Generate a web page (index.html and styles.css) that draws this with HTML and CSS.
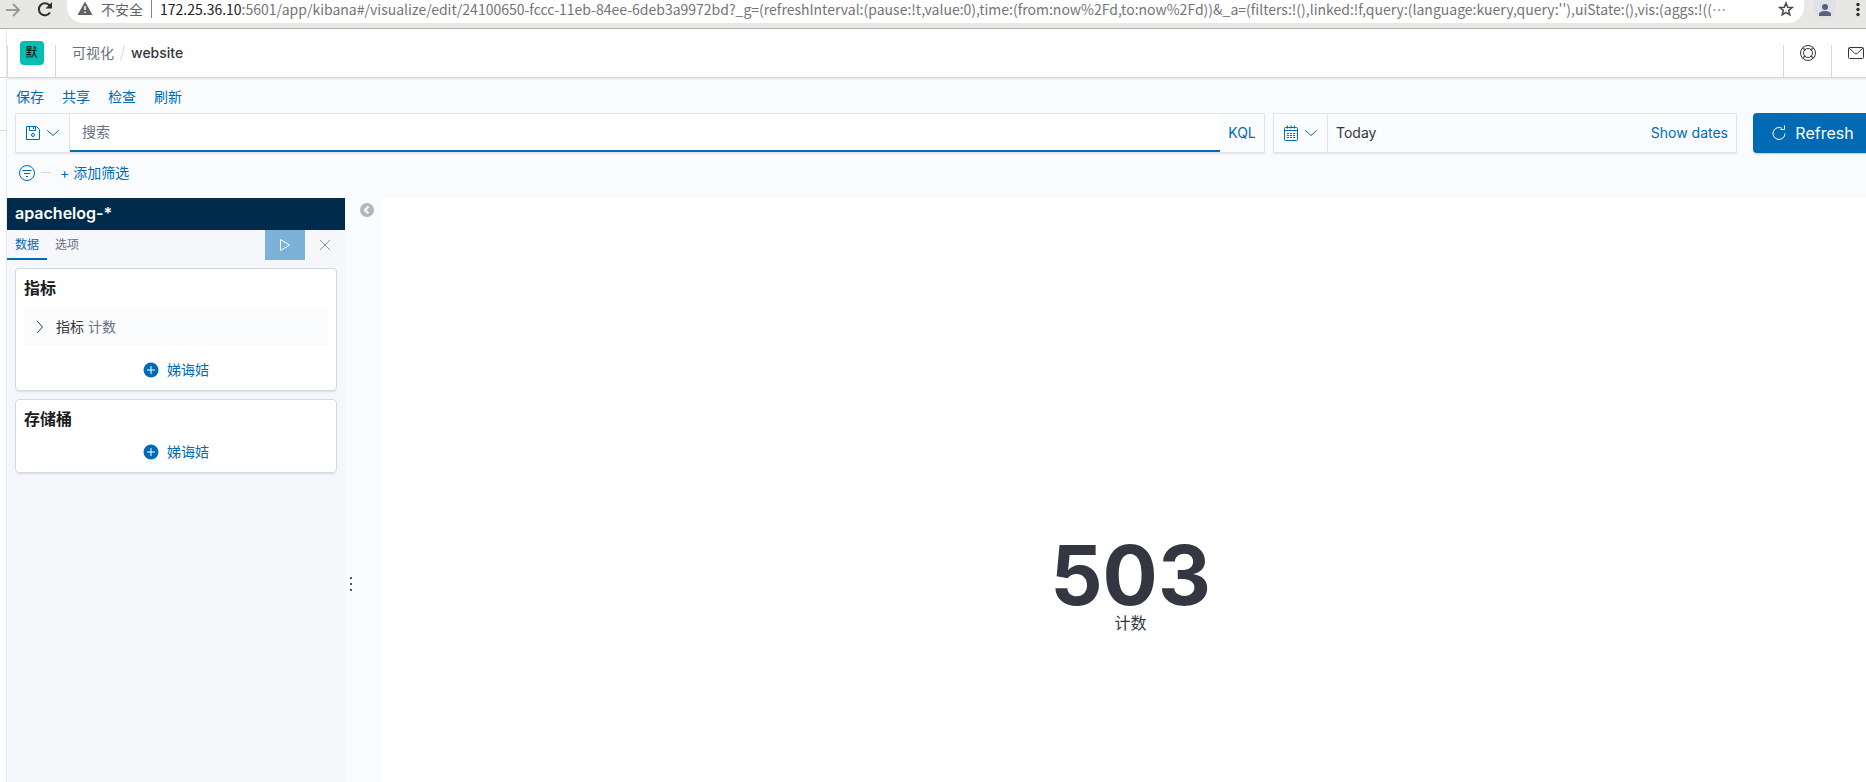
FILE: index.html
```html
<!DOCTYPE html>
<html lang="zh-CN">

<head>
  <meta charset="UTF-8">
  <meta name="viewport" content="width=device-width, initial-scale=1.0">
  <title>website - Kibana</title>
  <link rel="stylesheet" href="styles.css">
</head>

<body>
  <div class="browser-bar">
    <button class="browser-btn" type="button" aria-label="Forward">
      <svg width="16" height="16" viewBox="0 0 16 16" fill="none" stroke="#9a9a98" stroke-width="2"><path d="M1 9h13M8 3l6 6-6 6"/></svg>
    </button>
    <button class="browser-btn" type="button" aria-label="Reload">
      <svg width="16" height="16" viewBox="0 0 16 16"><path d="M13 11.5A6 6 0 1 1 12.600 4.500" fill="none" stroke="#2d3033" stroke-width="2"/><path d="M15 1v6.500H8.500z" fill="#2d3033"/></svg>
    </button>
    <div class="url-box">
      <svg width="16" height="16" viewBox="0 0 16 16"><path d="M8 1.500L15.500 15H.5z" fill="#5f6368"/><path d="M7.250 6h1.500v4h-1.500zM7.250 11.500h1.500V13h-1.500z" fill="#fff"/></svg>
      <span class="insecure">不安全</span>
      <span class="url"><b>172.25.36.10</b>:5601/app/kibana#/visualize/edit/24100650-fccc-11eb-84ee-6deb3a9972bd?_g=(refreshInterval:(pause:!t,value:0),time:(from:now%2Fd,to:now%2Fd))&amp;_a=(filters:!(),linked:!f,query:(language:kuery,query:''),uiState:(),vis:(aggs:!((…</span>
      <button class="browser-btn" type="button" aria-label="Bookmark">
        <svg width="16" height="16" viewBox="0 0 16 16" fill="none" stroke="#45484c" stroke-width="1.500"><path d="M8 2l1.700 4.200 4.500.3-3.500 2.900 1.100 4.400L8 11.400l-3.800 2.400 1.100-4.400-3.500-2.900 4.500-.3z"/></svg>
      </button>
    </div>
    <button class="avatar" type="button" aria-label="Profile">
      <svg width="14" height="14" viewBox="0 0 14 14" fill="#56617a"><circle cx="7" cy="4" r="3"/><path d="M1 13v-2c0-2 3-3 6-3s6 1 6 3v2z"/></svg>
    </button>
    <button class="browser-btn" type="button" aria-label="Menu">
      <svg width="4" height="16" viewBox="0 0 4 16" fill="#2d3033"><circle cx="2" cy="3.500" r="1.700"/><circle cx="2" cy="8.500" r="1.700"/><circle cx="2" cy="13.500" r="1.700"/></svg>
    </button>
  </div>

  <div class="page">
    <div class="rail">
      <div class="rail-top"></div>
      <div class="rail-group"></div>
    </div>

    <div class="app">
      <header class="header">
        <div class="header-cell space"><button class="space-badge" type="button">默</button></div>
        <nav class="breadcrumbs">
          <a href="#">可视化</a>
          <span class="slash"></span>
          <strong>website</strong>
        </nav>
        <div class="header-cell">
          <button class="icon-btn" type="button" aria-label="Help">
            <svg width="16" height="16" viewBox="0 0 16 16" fill="none" stroke="#343741"><circle cx="8" cy="8" r="7.500"/><circle cx="8" cy="8" r="4.500"/><path d="M3 2.500l2.500 2.500M2.500 3l2.500 2.500M13 2.500l-2.500 2.500M13.500 3l-2.500 2.500M3 13.500l2.500-2.500M2.500 13l2.500-2.500M13 13.500l-2.500-2.500M13.500 13l-2.500-2.500"/></svg>
          </button>
        </div>
        <div class="header-cell">
          <button class="icon-btn" type="button" aria-label="News">
            <svg width="16" height="16" viewBox="0 0 16 16" fill="none" stroke="#343741"><rect x=".5" y="2.500" width="15" height="11" rx="1"/><path d="M1 3l5.800 5.400a1.700 1.700 0 0 0 2.400 0L15 3"/></svg>
          </button>
        </div>
      </header>

      <nav class="menu">
        <a href="#">保存</a>
        <a href="#">共享</a>
        <a href="#">检查</a>
        <a href="#">刷新</a>
      </nav>

      <form class="query-row">
        <div class="query-bar">
          <button class="prepend" type="button" aria-label="Saved queries">
            <svg width="16" height="16" viewBox="0 0 16 16" fill="none" stroke="#006bb4"><path d="M1.500 1.500h10l3 3v10h-13zM4.500 1.500v4h6v-4M8.500 2v2"/><circle cx="8" cy="10" r="1.500"/></svg>
            <svg width="16" height="16" viewBox="0 0 16 16" fill="none" stroke="#006bb4" stroke-linecap="round"><path d="M2.500 5.500l5.500 5 5.500-5"/></svg>
          </button>
          <input class="query-input" type="text" placeholder="搜索" aria-label="搜索">
          <button class="kql" type="button">KQL</button>
        </div>
        <div class="date-picker">
          <button class="prepend" type="button" aria-label="Date quick select">
            <svg width="16" height="16" viewBox="0 0 16 16" fill="none" stroke="#006bb4"><rect x="1.500" y="2.500" width="13" height="13" rx="1"/><path d="M1 5.500h14M4.500.5v3M8 .5v3M11.500.5v3"/><path d="M4 8.500h8M4 10.500h8M4 12.500h8" stroke-dasharray="2 1"/></svg>
            <svg width="16" height="16" viewBox="0 0 16 16" fill="none" stroke="#006bb4" stroke-linecap="round"><path d="M2.500 5.500l5.500 5 5.500-5"/></svg>
          </button>
          <button class="date-range" type="button"><span>Today</span><span class="show-dates">Show dates</span></button>
        </div>
        <button class="refresh" type="button">
          <svg width="16" height="16" viewBox="0 0 16 16" fill="none" stroke="#fff"><path d="M11 3.300A6 6 0 1 0 14 8.500M9.500 4.500h4v-4"/></svg>
          Refresh
        </button>
      </form>

      <div class="filters">
        <button class="icon-btn" type="button" aria-label="Filter options">
          <svg width="16" height="16" viewBox="0 0 16 16" fill="none" stroke="#006bb4"><circle cx="8" cy="8" r="7.500"/><path d="M3.500 5.500h9M5 8.500h6M7 11.500h2"/></svg>
        </button>
        <span class="dash"></span>
        <a href="#">+ 添加筛选</a>
      </div>

      <main class="editor">
        <aside class="sidebar">
          <h2 class="index-title">apachelog-*</h2>
          <div class="tabs">
            <button class="tab active" type="button">数据</button>
            <button class="tab" type="button">选项</button>
            <button class="apply" type="button" aria-label="Apply changes">
              <svg width="16" height="16" viewBox="0 0 16 16" fill="none" stroke="#fff"><path d="M3.500 2.500v11l9-5.500z" stroke-linejoin="round"/></svg>
            </button>
            <button class="discard" type="button" aria-label="Discard changes">
              <svg width="12" height="12" viewBox="0 0 12 12" fill="none" stroke="#8e9299"><path d="M1 1l10 10M11 1L1 11"/></svg>
            </button>
          </div>

          <section class="card">
            <h3>指标</h3>
            <button class="agg" type="button">
              <svg width="16" height="16" viewBox="0 0 16 16" fill="none" stroke="#343741" stroke-linecap="round"><path d="M5.500 2.500l5 5.500-5 5.500"/></svg>
              <span>指标 <em>计数</em></span>
            </button>
            <button class="add" type="button">
              <svg width="16" height="16" viewBox="0 0 16 16"><circle cx="8" cy="8" r="7.500" fill="#006bb4"/><path d="M8 4v8M4 8h8" stroke="#fff"/></svg>
              娣诲姞
            </button>
          </section>

          <section class="card">
            <h3>存储桶</h3>
            <button class="add" type="button">
              <svg width="16" height="16" viewBox="0 0 16 16"><circle cx="8" cy="8" r="7.500" fill="#006bb4"/><path d="M8 4v8M4 8h8" stroke="#fff"/></svg>
              娣诲姞
            </button>
          </section>
        </aside>

        <div class="resizer">
          <button class="collapse" type="button" aria-label="Toggle sidebar">
            <svg width="14" height="14" viewBox="0 0 14 14"><circle cx="7" cy="7" r="7" fill="#b4b6ba"/><path d="M8.500 3.500L5 7l3.500 3.500" fill="none" stroke="#fff" stroke-width="2"/></svg>
          </button>
          <div class="grip"><i></i><i></i><i></i></div>
        </div>

        <div class="visualization">
          <div class="metric-value">503</div>
          <div class="metric-label">计数</div>
        </div>
      </main>
    </div>
  </div>
</body>

</html>
```
FILE: styles.css
```css
* {
  box-sizing: border-box;
}

body {
  margin: 0;
  height: 100vh;
  overflow: hidden;
  background-color: #fff;
  color: #343741;
  font-family: Inter, "Noto Sans CJK SC", sans-serif;
  font-size: 14px;
  line-height: 20px;
}

button {
  display: flex;
  align-items: center;
  justify-content: center;
  margin: 0;
  padding: 0;
  border: none;
  background: none;
  color: inherit;
  font: inherit;
  cursor: pointer;
}

svg {
  display: block;
  flex: none;
}

a {
  color: #006bb4;
  text-decoration: none;
}

/* browser toolbar */
.browser-bar {
  display: flex;
  align-items: flex-start;
  height: 29px;
  padding: 0 6px 0 5px;
  background-color: #e7e7e4;
  border-bottom: 1px solid #a9a9a5;
  font-family: "Noto Sans CJK SC", sans-serif;
}

.browser-btn {
  height: 18px;
  margin-right: 16px;
}

.browser-bar > .browser-btn:last-child {
  margin: 0;
}

.url-box {
  display: flex;
  flex: 1;
  align-items: flex-start;
  min-width: 0;
  height: 23px;
  padding: 0 4px 0 10px;
  margin-right: 10px;
  margin-left: -2px;
  background-color: #fff;
  border-radius: 0 0 16px 16px;
}

.insecure {
  margin: 0 8px;
  padding-right: 8px;
  border-right: 1px solid #80868b;
  color: #5f6368;
  line-height: 18px;
}

.url {
  flex: 1;
  color: #757575;
  line-height: 18px;
  white-space: nowrap;
}

.url b {
  color: #202124;
  font-weight: normal;
}

.url-box .browser-btn {
  margin: 0 6px;
}

.avatar {
  width: 22px;
  height: 20px;
  margin-right: 20px;
  background-color: #dfe1e8;
  border-radius: 0 0 11px 11px;
}

/* page frame */
.page {
  display: flex;
}

.rail {
  flex: none;
  width: 7px;
}

.rail-top {
  height: 49px;
  border-bottom: 1px solid #d3dae6;
}

.rail-group {
  height: 53px;
  border-bottom: 1px solid #d3dae6;
}

.app {
  flex: none;
  width: calc(100% + 7px);
  background-color: #fafbfd;
  box-shadow: -1px 0 1px #e6eaf1;
}

.header {
  display: flex;
  align-items: flex-end;
  height: 49px;
  padding-right: 1px;
  background-color: #fff;
  border-bottom: 1px solid #d3dae6;
  box-shadow: 0 2px 2px -1px rgba(152, 162, 179, 0.3);
}

.header-cell {
  display: flex;
  align-items: flex-start;
  justify-content: center;
  width: 48px;
  height: 32px;
  border-left: 1px solid #d3dae6;
}

.header-cell.space {
  width: 49px;
  border-right: 1px solid #d3dae6;
}

.space-badge {
  width: 24px;
  height: 24px;
  margin-top: -4px;
  background-color: #00bfb3;
  border-radius: 4px;
  color: #000;
  font-size: 12px;
}

.breadcrumbs {
  display: flex;
  flex: 1;
  align-items: center;
  height: 32px;
  padding: 0 16px 16px;
}

.breadcrumbs a {
  color: #69707d;
}

.breadcrumbs strong {
  font-weight: 500;
}

.slash {
  width: 1px;
  height: 16px;
  margin: 0 8px;
  background-color: #d3dae6;
  transform: rotate(15deg);
}

/* query area */
.menu {
  display: flex;
  gap: 18px;
  padding: 9px 9px 6px;
}

.query-row {
  display: flex;
  gap: 8px;
  padding: 0 8px;
}

.query-bar,
.date-picker {
  display: flex;
  height: 40px;
  border: 1px solid #e0e4ec;
  background-color: #fbfcfd;
  box-shadow: 0 2px 2px -1px rgba(152, 162, 179, 0.3);
}

.query-bar {
  flex: 1;
}

.date-picker {
  width: 464px;
}

.prepend {
  gap: 4px;
  width: 54px;
  border-right: 1px solid #e0e4ec;
}

.query-input {
  flex: 1;
  padding: 0 12px;
  border: none;
  border-bottom: 2px solid #006bb4;
  background-color: #fff;
  outline: none;
  color: #343741;
  font: inherit;
}

.query-input::placeholder {
  color: #69707d;
}

.kql {
  width: 44px;
  color: #006bb4;
}

.date-range {
  flex: 1;
  justify-content: space-between;
  padding: 0 8px;
}

.show-dates {
  color: #006bb4;
}

.refresh {
  gap: 8px;
  width: 119px;
  height: 40px;
  margin-left: 8px;
  background-color: #006bb4;
  border-radius: 4px;
  box-shadow: 0 2px 2px -1px rgba(54, 97, 126, 0.3);
  color: #fff;
  font-size: 16px;
}

.filters {
  display: flex;
  align-items: center;
  height: 45px;
  padding: 0 12px 6px;
}

.dash {
  width: 10px;
  height: 1px;
  margin: 0 9px 0 6px;
  background-color: #d3dae6;
}

/* editor */
.editor {
  display: flex;
  height: calc(100vh - 10px);
}

.sidebar {
  width: 338px;
  background-color: #f5f7fa;
}

.index-title {
  margin: 0;
  padding: 3px 8px 5px;
  background-color: #002b4a;
  color: #fff;
  font-size: 16px;
  font-weight: 600;
  line-height: 24px;
}

.tabs {
  display: flex;
  height: 30px;
  margin-bottom: 8px;
}

.tab {
  width: 40px;
  padding-top: 2px;
  border-bottom: 2px solid transparent;
  color: #69707d;
  font-size: 12px;
}

.tab.active {
  border-color: #006bb4;
  color: #006bb4;
}

.apply {
  width: 40px;
  margin-left: auto;
  background-color: #7cb1d8;
}

.discard {
  width: 40px;
}

.card {
  margin: 0 8px 8px;
  padding: 8px;
  background-color: #fff;
  border: 1px solid #d3dae6;
  border-radius: 4px;
  box-shadow: 0 2px 2px -1px rgba(152, 162, 179, 0.3);
}

.card h3 {
  margin: 0 0 10px;
  color: #1a1c21;
  font-size: 16px;
  font-weight: 600;
  line-height: 22px;
}

.agg {
  gap: 8px;
  justify-content: flex-start;
  width: 100%;
  height: 37px;
  margin-bottom: 12px;
  padding: 0 8px 2px;
  background-color: #fafbfd;
  border-radius: 4px;
}

.agg em {
  color: #69707d;
  font-style: normal;
}

.add {
  gap: 8px;
  width: 100%;
  height: 24px;
  color: #006bb4;
}

.resizer {
  display: flex;
  flex-direction: column;
  width: 36px;
  padding: 5px 4px;
}

.collapse {
  align-self: flex-end;
  width: 20px;
  height: 14px;
}

.grip {
  display: flex;
  flex: 1;
  flex-direction: column;
  gap: 4px;
  justify-content: center;
  margin-top: -14px;
}

.grip i {
  width: 2px;
  height: 2px;
  margin-left: 1px;
  background-color: #535966;
}

.visualization {
  display: flex;
  flex: 1;
  flex-direction: column;
  align-items: center;
  justify-content: center;
  padding-top: 8px;
  background-color: #fff;
}

.metric-value {
  font-size: 82px;
  font-weight: 700;
  line-height: 70px;
}

.metric-label {
  font-size: 16px;
  line-height: 24px;
}
```
